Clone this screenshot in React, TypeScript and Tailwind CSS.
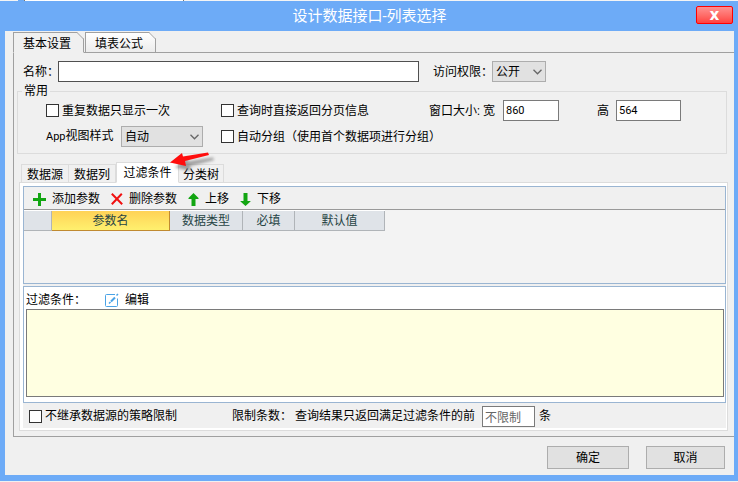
import { useState } from "react";
import type { InputHTMLAttributes, ReactNode } from "react";

const OUTER_TABS = ["基本设置", "填表公式"];

const INNER_TABS = [
  { label: "数据源", width: "w-12" },
  { label: "数据列", width: "w-[47px]" },
  { label: "过滤条件", width: "w-[63px]" },
  { label: "分类树", width: "w-[45px]" },
];

const COLUMNS = [
  { label: "", width: "w-7" },
  { label: "参数名", width: "w-[118px]", selected: true },
  { label: "数据类型", width: "w-[73px]" },
  { label: "必填", width: "w-[52px]" },
  { label: "默认值", width: "w-[90px]" },
];

function Checkbox({ id, label }: { id: string; label: string }) {
  return (
    <div className="flex items-center gap-[3px]">
      <input
        id={id}
        type="checkbox"
        className="size-[13px] shrink-0 appearance-none border border-[#333] bg-white checked:bg-[#4a90d9]"
      />
      <label htmlFor={id}>{label}</label>
    </div>
  );
}

function Dropdown({ id, options, className }: { id: string; options: string[]; className: string }) {
  return (
    <div className={`relative ${className}`}>
      <select
        id={id}
        className="h-[21px] w-full appearance-none border border-[#adadad] bg-[#e1e1e1] pt-0.5 pl-[3px] leading-[17px] outline-none"
      >
        {options.map((o) => (
          <option key={o}>{o}</option>
        ))}
      </select>
      <svg
        viewBox="0 0 9 6"
        className="pointer-events-none absolute top-2 right-1 h-1.5 w-[9px]"
        fill="none"
        stroke="#666"
        strokeWidth="1.3"
      >
        <path d="M.5 .8 4.5 4.8 8.5 .8" />
      </svg>
    </div>
  );
}

function TextBox({ className = "", ...rest }: InputHTMLAttributes<HTMLInputElement>) {
  return (
    <input
      type="text"
      className={`h-[21px] border bg-white outline-none ${className}`}
      {...rest}
    />
  );
}

function ToolButton({ icon, children }: { icon: ReactNode; children: ReactNode }) {
  return (
    <button type="button" className="flex items-center gap-1.5 whitespace-nowrap">
      {icon}
      {children}
    </button>
  );
}

const PlusIcon = () => (
  <svg viewBox="0 0 13 13" className="size-[13px]" fill="#12a512">
    <path d="M5 0h3v5h5v3H8v5H5V8H0V5h5z" />
  </svg>
);

const CrossIcon = () => (
  <svg viewBox="0 0 12 12" className="size-3" fill="none" stroke="#f01010" strokeWidth="2">
    <path d="M.8 .8 11.2 11.2M10.8 .8 .8 11.2" />
  </svg>
);

const UpIcon = () => (
  <svg viewBox="0 0 11 13" className="h-[13px] w-[11px]" fill="#12a512">
    <path d="M5.5 0 10.5 5v1H7.500v7h-4V6H.5V5z" />
  </svg>
);

const DownIcon = () => (
  <svg viewBox="0 0 11 13" className="h-[13px] w-[11px]" fill="#12a512">
    <path d="M5.5 13 10.5 8.500V8H7.500V0h-4v8H.5v.5z" />
  </svg>
);

const EditIcon = () => (
  <svg viewBox="0 0 14 14" className="size-3.5" fill="none" stroke="#4aa3e6">
    <path d="M10 1.5H1.5A1 1 0 0 0 .5 2.5v10a1 1 0 0 0 1 1h10a1 1 0 0 0 1-1V5.500" />
    <path d="M6 8.500 10 4.500" strokeWidth="2" />
    <path d="M4 10.500 5.500 9M11.500 2.500l1.500-1.500" strokeWidth="1.500" />
  </svg>
);

// Red pointer laid over the inner tab strip
const PointerArrow = () => (
  <svg
    viewBox="0 0 46 22"
    className="pointer-events-none absolute -top-2.5 left-[153px] z-20 h-[22px] w-[46px] overflow-visible"
  >
    <defs>
      <filter id="soft" x="-20%" y="-20%" width="150%" height="160%">
        <feGaussianBlur stdDeviation="1.5" />
      </filter>
    </defs>
    <path
      d="M0 10.500 12 1l1 3.500L38 .5 39 3 15 9l1 5z"
      transform="translate(5 5)"
      fill="#666"
      opacity=".6"
      filter="url(#soft)"
    />
    <path d="M0 10.500 12 1l1 3.500L38 .5 39 3 15 9l1 5z" fill="#ff0d0d" />
  </svg>
);

export default function App() {
  const [outerTab, setOuterTab] = useState(0);
  const [innerTab, setInnerTab] = useState(2);

  return (
    <div className="flex min-h-screen flex-col bg-[#f0f0f0] font-['Roboto','Noto_Sans_CJK_SC',sans-serif] text-xs leading-[14px] text-black">
      {/* Sliver of the window behind */}
      <div className="flex h-px shrink-0 bg-[#f4f4f4]">
        <div className="w-[18px]" />
        <div className="w-1.5 bg-[#6aaaf5]" />
        <div className="w-[160px] border-x border-[#777] bg-white" />
      </div>

      <div className="mb-px flex flex-1 flex-col bg-[#6dabf7] pr-1 pb-1.5 pl-[5px]">
        <header className="relative flex h-[30px] shrink-0 items-center justify-center">
          <h1 className="text-[15px] leading-5 text-white">设计数据接口-列表选择</h1>
          <button
            type="button"
            aria-label="关闭"
            className="absolute top-[5px] right-px flex h-[18px] w-[37px] items-center justify-center rounded-xs border border-[#ff0000] bg-linear-to-b from-[#ff9090] to-[#ff4040] font-['Open_Sans',sans-serif] text-[13px] font-extrabold text-white"
          >
            X
          </button>
        </header>

        <main className="flex flex-1 flex-col bg-[#f0f0f0] pt-px pl-2">
          <div role="tablist" className="relative z-10 -mb-px flex gap-px">
            {OUTER_TABS.map((label, i) => (
              <button
                key={label}
                type="button"
                role="tab"
                aria-selected={outerTab === i}
                onClick={() => setOuterTab(i)}
                className={`relative h-[21px] w-[71px] border border-[#a0a0a0] pt-[3px] pr-[3px] ${
                  outerTab === i ? "border-b-[#f0f0f0] bg-[#f0f0f0]" : "bg-linear-to-b from-white to-[#ececec]"
                }`}
              >
                {label}
                <svg viewBox="0 0 7 7" className="absolute -top-px -right-px size-[7px]" fill="#f0f0f0">
                  <path d="M0 0h7v7z" />
                  <path d="M0 .5 6.500 7" stroke="#a0a0a0" />
                </svg>
              </button>
            ))}
          </div>

          <section className="flex flex-1 flex-col border-y border-l border-[#a0a0a0] pt-2 pr-1.5 pb-[5px] pl-[3px]">
            <div className="flex items-center pr-[182px] pl-1.5">
              <label htmlFor="name" className="w-[35px] whitespace-nowrap">
                名称：
              </label>
              <TextBox id="name" className="min-w-[200px] flex-1 border-[#505050] px-1" />
              <label htmlFor="access" className="ml-3.5 w-[59px] whitespace-nowrap">
                访问权限：
              </label>
              <Dropdown id="access" options={["公开", "私有"]} className="w-[54px]" />
            </div>

            <fieldset className="mt-0.5 mr-px flex flex-col border border-[#dcdcdc] pt-0.5 pb-1.5">
              <legend className="ml-1 px-0.5">常用</legend>
              <div className="grid grid-cols-[175px_208px_1fr] items-center gap-y-[5px] pl-7">
                <Checkbox id="distinct" label="重复数据只显示一次" />
                <Checkbox id="paging" label="查询时直接返回分页信息" />
                <div className="flex items-center whitespace-nowrap">
                  <label htmlFor="win-width" className="w-[74px]">
                    窗口大小: 宽
                  </label>
                  <TextBox id="win-width" defaultValue="860" className="w-14 border-[#7a7a7a] px-0.5 text-[11px]" />
                  <label htmlFor="win-height" className="ml-[38px] w-[19px]">
                    高
                  </label>
                  <TextBox id="win-height" defaultValue="564" className="w-[65px] border-[#7a7a7a] px-0.5 text-[11px]" />
                </div>
                <div className="flex items-center">
                  <label htmlFor="app-view" className="w-[75px] whitespace-nowrap">
                    <span className="text-[11px]">App</span>视图样式
                  </label>
                  <Dropdown id="app-view" options={["自动", "列表"]} className="w-[82px]" />
                </div>
                <div className="col-span-2">
                  <Checkbox id="grouping" label="自动分组（使用首个数据项进行分组）" />
                </div>
              </div>
            </fieldset>

            <div className="relative z-10 mt-2 -mb-px">
              <div role="tablist" className="flex h-[21px] items-end pl-1">
                {INNER_TABS.map((tab, i) => (
                  <button
                    key={tab.label}
                    type="button"
                    role="tab"
                    aria-selected={innerTab === i}
                    onClick={() => setInnerTab(i)}
                    className={`border border-[#dcdcdc] whitespace-nowrap ${tab.width} ${
                      innerTab === i ? "h-[21px] border-b-white bg-white" : "h-[19px] border-l-0 bg-[#f0f0f0] pt-0.5 first:border-l"
                    }`}
                  >
                    {tab.label}
                  </button>
                ))}
              </div>
              <PointerArrow />
            </div>

            <div className="ml-0.5 flex flex-1 flex-col border border-[#dcdcdc] bg-white px-[3px] pt-[3px] pr-px pb-0.5">
              <div className="flex flex-1 flex-col bg-[#f0f0f0]">
                <div className="h-[98px] border border-[#9ab5d2] bg-[#f3f3f3]">
                  <div className="flex h-[23px] items-center gap-[11px] border-b border-[#999] bg-[#f0f0f0] pt-0.5 pl-[9px]">
                    <ToolButton icon={<PlusIcon />}>添加参数</ToolButton>
                    <ToolButton icon={<CrossIcon />}>删除参数</ToolButton>
                    <ToolButton icon={<UpIcon />}>上移</ToolButton>
                    <ToolButton icon={<DownIcon />}>下移</ToolButton>
                  </div>
                  <table className="w-[361px] table-fixed border-separate border-spacing-0 border-t border-white">
                    <thead>
                      <tr>
                        {COLUMNS.map((c) => (
                          <th
                            key={c.label}
                            scope="col"
                            className={`h-5 border-r border-b p-0 pt-px font-normal text-[#264444] ${c.width} ${
                              c.selected
                                ? "border-[#c08a30] bg-linear-to-b from-[#ffd257] to-[#fff06e]"
                                : "border-[#b0b4b8] bg-[#dfe3e8]"
                            }`}
                          >
                            {c.label}
                          </th>
                        ))}
                      </tr>
                    </thead>
                  </table>
                </div>

                <div className="mt-0.5 flex flex-1 flex-col border border-[#9ab5d2] bg-white pr-px pb-[5px] pl-0.5">
                  <div className="flex h-[22px] items-center pt-1">
                    <label htmlFor="filter" className="w-[79px]">
                      过滤条件：
                    </label>
                    <ToolButton icon={<EditIcon />}>编辑</ToolButton>
                  </div>
                  <textarea
                    id="filter"
                    className="min-h-[88px] flex-1 resize-none border border-[#7a7a7a] bg-[#ffffe1] p-1 outline-none"
                  />
                </div>

                <div className="flex h-[25px] items-center pt-px pl-1.5">
                  <div className="w-[203px]">
                    <Checkbox id="no-inherit" label="不继承数据源的策略限制" />
                  </div>
                  <label htmlFor="limit" className="w-[250px] whitespace-nowrap">
                    限制条数： 查询结果只返回满足过滤条件的前
                  </label>
                  <TextBox id="limit" defaultValue="不限制" className="w-[53px] border-[#7a7a7a] px-0.5 text-[#666]" />
                  <span className="ml-1">条</span>
                </div>
              </div>
            </div>
          </section>

          <footer className="flex justify-end gap-[17px] pt-[9px] pr-[9px] pb-1.5">
            <button type="button" className="h-[23px] w-[82px] border border-[#adadad] bg-[#e1e1e1]">
              确定
            </button>
            <button type="button" className="h-[23px] w-[79px] border border-[#adadad] bg-[#e1e1e1]">
              取消
            </button>
          </footer>
        </main>
      </div>
    </div>
  );
}
